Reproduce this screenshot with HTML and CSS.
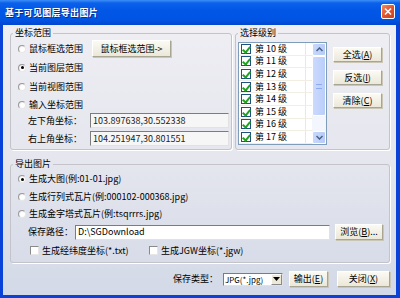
FILE: index.html
```html
<!DOCTYPE html>
<html lang="zh-CN">
<head>
    <meta charset="UTF-8">
    <title>基于可见图层导出图片</title>
    <link rel="stylesheet" href="styles.css">
</head>
<body>
    <div class="window">
        <div class="titlebar">
            <span class="title">基于可见图层导出图片</span>
            <span class="close-btn">
                <svg width="14" height="15" viewBox="0 0 14 15">
                    <path d="M4 4.5 L10 10.5 M10 4.5 L4 10.5" stroke="#fff" stroke-width="1.6" fill="none"/>
                </svg>
            </span>
        </div>

        <div class="client">
            <div class="top-row">
                <fieldset class="group range">
                    <legend>坐标范围</legend>
                    <div class="opt-row">
                        <span class="radio"></span>鼠标框选范围
                        <button class="btn pick">鼠标框选范围-&gt;</button>
                    </div>
                    <div class="opt-row"><span class="radio checked"></span>当前图层范围</div>
                    <div class="opt-row"><span class="radio"></span>当前视图范围</div>
                    <div class="opt-row short"><span class="radio"></span>输入坐标范围</div>
                    <div class="coord-row">
                        <span class="coord-label">左下角坐标：</span>
                        <span class="field coord">103.897638,30.552338</span>
                    </div>
                    <div class="coord-row">
                        <span class="coord-label">右上角坐标：</span>
                        <span class="field coord">104.251947,30.801551</span>
                    </div>
                </fieldset>

                <fieldset class="group levels">
                    <legend>选择级别</legend>
                    <div class="levels-body">
                        <div class="listbox">
                            <ul class="level-list">
                                <li><span class="name"><span class="check"></span>第 10 级</span></li>
                                <li><span class="name"><span class="check"></span>第 11 级</span></li>
                                <li><span class="name"><span class="check"></span>第 12 级</span></li>
                                <li><span class="name"><span class="check"></span>第 13 级</span></li>
                                <li><span class="name"><span class="check"></span>第 14 级</span></li>
                                <li><span class="name"><span class="check"></span>第 15 级</span></li>
                                <li><span class="name"><span class="check"></span>第 16 级</span></li>
                                <li><span class="name"><span class="check"></span>第 17 级</span></li>
                            </ul>
                            <div class="scrollbar">
                                <span class="sb-btn">
                                    <svg width="7" height="5" viewBox="0 0 7 5"><path d="M0.5 4 L3.5 1 L6.5 4" stroke="#4d6185" stroke-width="1.5" fill="none"/></svg>
                                </span>
                                <span class="sb-thumb"><span class="grip"></span></span>
                                <span class="sb-track"></span>
                                <span class="sb-btn">
                                    <svg width="7" height="5" viewBox="0 0 7 5"><path d="M0.5 1 L3.5 4 L6.5 1" stroke="#4d6185" stroke-width="1.5" fill="none"/></svg>
                                </span>
                            </div>
                        </div>
                        <div class="side-btns">
                            <button class="btn">全选(<u>A</u>)</button>
                            <button class="btn">反选(<u>I</u>)</button>
                            <button class="btn">清除(<u>C</u>)</button>
                        </div>
                    </div>
                </fieldset>
            </div>

            <fieldset class="group export">
                <legend>导出图片</legend>
                <div class="opt-row"><span class="radio checked"></span>生成大图(例:01-01.jpg)</div>
                <div class="opt-row r2"><span class="radio"></span>生成行列式瓦片(例:000102-000368.jpg)</div>
                <div class="opt-row"><span class="radio"></span>生成金字塔式瓦片(例:tsqrrrs.jpg)</div>
                <div class="path-row">
                    <span class="path-label">保存路径：</span>
                    <span class="field path">D:\SGDownload</span>
                    <button class="btn browse">浏览(<u>B</u>)...</button>
                </div>
                <div class="check-row">
                    <span class="check-item first"><span class="box"></span>生成经纬度坐标(*.txt)</span>
                    <span class="check-item"><span class="box"></span>生成JGW坐标(*.jgw)</span>
                </div>
            </fieldset>

            <div class="bottom-bar">
                <span class="type-label">保存类型：</span>
                <span class="select">
                    <span class="select-text">JPG(*.jpg)</span>
                    <span class="select-arrow">
                        <svg width="7" height="4" viewBox="0 0 7 4"><path d="M0 0 H7 L3.5 4 Z" fill="#000"/></svg>
                    </span>
                </span>
                <button class="btn out">输出(<u>E</u>)</button>
                <button class="btn close">关闭(<u>X</u>)</button>
            </div>
        </div>
    </div>
</body>
</html>
```

FILE: styles.css
```css
* {
    box-sizing: border-box;
}
body {
    margin: 0;
    font-family: "Noto Sans CJK SC", "Liberation Sans", sans-serif;
    font-size: 9px;
    line-height: 12px;
    color: #000;
}
.window {
    width: 400px;
    height: 298px;
    display: flex;
    flex-direction: column;
    background: #0842d8;
}
.titlebar {
    height: 25px;
    flex: none;
    display: flex;
    justify-content: space-between;
    padding: 0 5px;
    background: linear-gradient(#3d8ef7 0, #0b61ea 3px, #0257e6 40%, #0054e3 80%, #0046d0 100%);
}
.title {
    color: #fff;
    font-weight: bold;
    font-size: 9px;
    letter-spacing: 0.3px;
    line-height: 25px;
    text-shadow: 1px 1px 0 #0b2a8c;
}
.close-btn {
    width: 14px;
    height: 15px;
    margin-top: 4px;
    border: 1px solid #fff;
    border-radius: 2px;
    background: linear-gradient(135deg, #f08a63, #e0512b 55%, #c8401f);
}
.close-btn svg {
    display: block;
    margin: -1px 0 0 -1px;
}
.client {
    flex: 1;
    margin: 0 4px 3px 3px;
    padding: 2px 6px 0 7px;
    display: flex;
    flex-direction: column;
    background: linear-gradient(#eeeef3, #e5e6ee 50%, #d3d9e7);
}
.top-row {
    display: flex;
    gap: 3px;
}
.group {
    margin: 0;
    padding: 0;
    min-width: 0;
    border: 1px solid #c3c3c9;
    border-radius: 3px;
    box-shadow: 1px 1px 0 #fff;
}
.group legend {
    margin-left: 2px;
    padding: 0 2px;
    line-height: 12px;
}
.range {
    width: 222px;
    padding: 0 0 3px 0;
}
.opt-row {
    height: 19px;
    display: flex;
    align-items: center;
    padding-left: 7px;
}
.opt-row.short {
    height: 17px;
}
.radio {
    width: 8px;
    height: 8px;
    margin-right: 3px;
    border-radius: 50%;
    border: 1px solid #9a9a9a;
    border-right-color: #e8e8e8;
    border-bottom-color: #e8e8e8;
    background: radial-gradient(circle at 60% 60%, #fff 40%, #dcdcdc);
    display: flex;
    align-items: center;
    justify-content: center;
}
.radio.checked::after {
    content: "";
    width: 3px;
    height: 3px;
    border-radius: 50%;
    background: #000;
}
.btn {
    font-family: inherit;
    font-size: 9px;
    line-height: 12px;
    padding: 0;
    color: #000;
    border: 1px solid;
    border-color: #fff #a8a593 #a8a593 #fff;
    background: linear-gradient(#fbfaf3, #ebe8d9);
    box-shadow: 1px 1px 0 #c9c6b6;
}
.btn u {
    text-decoration: underline;
}
.pick {
    width: 79px;
    height: 17px;
    margin-left: 9px;
}
.coord-row {
    height: 15px;
    display: flex;
    align-items: center;
    padding-left: 17px;
}
.coord-row + .coord-row {
    margin-top: 3px;
}
.coord-label {
    width: 62px;
}
.field {
    height: 15px;
    display: flex;
    align-items: center;
    padding-left: 2px;
    border: 1px solid;
    border-color: #7c7c7c #e2e2e2 #e2e2e2 #7c7c7c;
    background: #fff;
}
.coord {
    width: 139px;
    background: #f6f6f6;
    color: #222;
}
.levels {
    flex: 1;
}
.levels-body {
    display: flex;
    padding: 3px 0 0 2px;
}
.listbox {
    width: 89px;
    height: 103px;
    display: flex;
    border: 1px solid #7f9db9;
    background: #fff;
}
.level-list {
    flex: 1;
    margin: 0;
    padding: 0;
    list-style: none;
}
.level-list li {
    height: 12.6px;
    display: flex;
    border-bottom: 1px solid #f1efe4;
}
.level-list .name {
    width: 67px;
    display: flex;
    align-items: center;
    padding-left: 2px;
    border-right: 1px solid #ebe9dc;
}
.check {
    width: 10px;
    height: 10px;
    margin-right: 4px;
    border: 1px solid #1c5180;
    background: #fff;
    display: flex;
    justify-content: center;
}
.check::after {
    content: "";
    width: 3px;
    height: 6px;
    margin-top: 0;
    border: solid #21a121;
    border-width: 0 2px 2px 0;
    transform: rotate(40deg);
}
.scrollbar {
    width: 14px;
    display: flex;
    flex-direction: column;
    background: #f3f6fd;
}
.sb-btn {
    height: 13px;
    display: flex;
    align-items: center;
    justify-content: center;
    border: 1px solid #fff;
    border-radius: 2px;
    background: linear-gradient(90deg, #c8d8fc, #b6cbf8);
}
.sb-thumb {
    height: 60px;
    display: flex;
    align-items: center;
    justify-content: center;
    border: 1px solid #fff;
    border-radius: 2px;
    background: linear-gradient(90deg, #cbdafd, #bacefa);
}
.grip {
    width: 6px;
    height: 5px;
    border-top: 1px solid #8eaaf0;
    border-bottom: 1px solid #8eaaf0;
}
.sb-track {
    flex: 1;
}
.side-btns {
    display: flex;
    flex-direction: column;
    gap: 8px;
    margin: 5px 0 0 6px;
}
.side-btns .btn {
    width: 49px;
    height: 15px;
}
.export {
    margin-top: 8px;
    padding: 0 0 2px 0;
}
.export .opt-row {
    height: 18px;
}
.export .opt-row.r2 {
    height: 17px;
}
.path-row {
    height: 18px;
    display: flex;
    align-items: center;
    padding: 0 6px 0 17px;
}
.path-label {
    width: 47px;
}
.path {
    flex: 1;
}
.browse {
    width: 48px;
    height: 16px;
    margin-left: 5px;
}
.check-row {
    height: 19px;
    display: flex;
    align-items: center;
    padding-left: 19px;
}
.check-item {
    display: flex;
    align-items: center;
}
.check-item.first {
    width: 119px;
}
.box {
    width: 9px;
    height: 9px;
    margin-right: 3px;
    border: 1px solid;
    border-color: #8a8a8a #e6e6e6 #e6e6e6 #8a8a8a;
    background: #fff;
}
.bottom-bar {
    flex: 1;
    display: flex;
    align-items: center;
    justify-content: flex-end;
}
.type-label {
    margin-right: 5px;
}
.select {
    width: 60px;
    height: 13px;
    display: flex;
    margin-right: 6px;
    border: 1px solid;
    border-color: #7c7c7c #e2e2e2 #e2e2e2 #7c7c7c;
    background: #fff;
}
.select-text {
    flex: 1;
    font-size: 8px;
    line-height: 11px;
    padding-left: 1px;
}
.select-arrow {
    width: 11px;
    display: flex;
    align-items: center;
    justify-content: center;
    border: 1px solid;
    border-color: #fff #8a8a8a #8a8a8a #fff;
    background: #ece9d8;
}
.out {
    width: 39px;
    height: 16px;
    margin-right: 9px;
}
.close {
    width: 53px;
    height: 16px;
}
```
